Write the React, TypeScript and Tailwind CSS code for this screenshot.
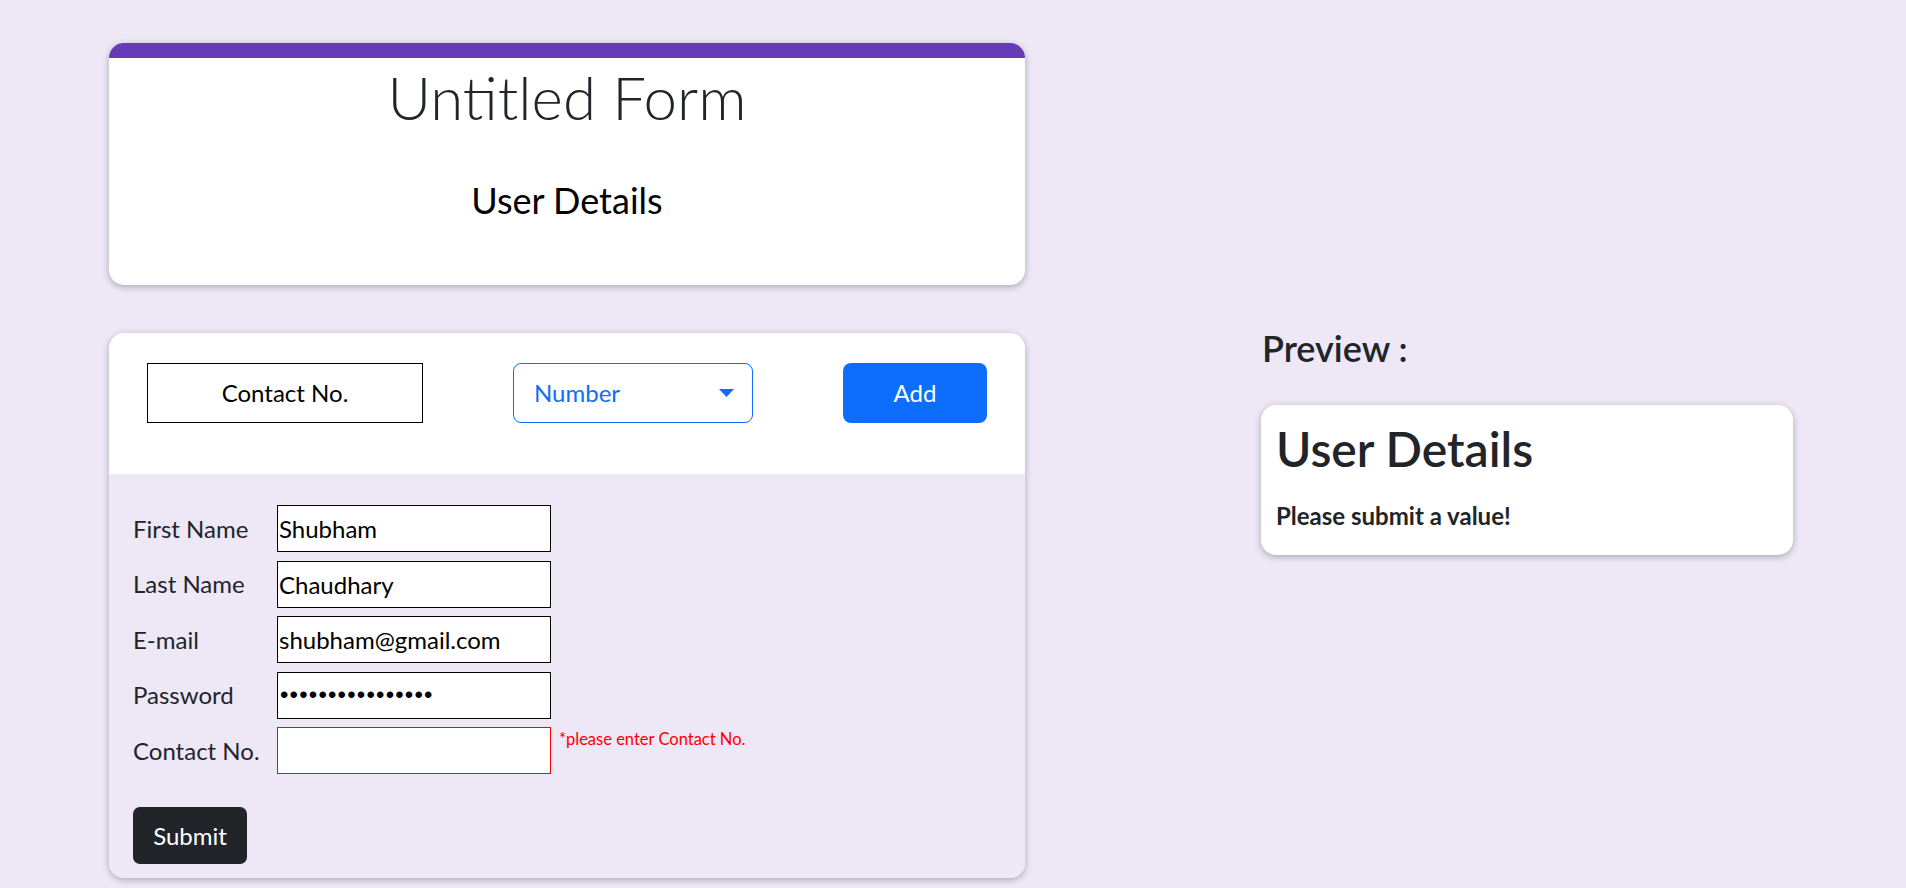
import React from "react";

export default function App() {
  const rows: { label: string; value: string; type?: string; error?: string }[] = [
    { label: "First Name", value: "Shubham" },
    { label: "Last Name", value: "Chaudhary" },
    { label: "E-mail", value: "shubham@gmail.com" },
    { label: "Password", value: "abcdefghijklmnop", type: "password" },
    { label: "Contact No.", value: "", error: "*please enter Contact No." },
  ];
  return (
    <div className="min-h-screen bg-[#ede7f6] font-['Lato',sans-serif] text-[#212529] flex items-start">
      <div className="ml-[109px] w-[916px] pt-[43px]">
        <div className="bg-white rounded-[15px] border-t-[15px] border-[#673ab7] shadow-[0_2px_7px_rgba(0,0,0,0.28)] h-[242px] flex flex-col items-center">
          <h1 className="mt-[3px] text-[60px] leading-[1.2] font-light">Untitled Form</h1>
          <h4 className="mt-[46px] text-[36px] leading-[1.2] text-black">User Details</h4>
        </div>
        <div className="mt-[48px] bg-white rounded-[15px] overflow-hidden shadow-[0_2px_7px_rgba(0,0,0,0.28)] h-[545px] flex flex-col">
          <div className="h-[141px] shrink-0 px-[38px] pt-[30px] flex justify-between items-start">
            <div className="w-[276px] h-[60px] border border-black flex items-center justify-center text-[24px] text-black">
              Contact No.
            </div>
            <div className="w-[240px] h-[60px] border border-[#0d6efd] rounded-[8px] flex items-center justify-between pl-[20px] pr-[18px] text-[24px] text-[#0d6efd]">
              <span>Number</span>
              <svg width="15" height="8" viewBox="0 0 15 8">
                <path d="M0 0 L15 0 L7.5 8 Z" fill="#0d6efd" />
              </svg>
            </div>
            <div className="w-[144px] h-[60px] bg-[#0d6efd] rounded-[8px] flex items-center justify-center text-[24px] text-white">
              Add
            </div>
          </div>
          <div className="flex-1 bg-[#ede7f6] px-[24px] pt-[31px] flex flex-col">
            <div className="flex flex-col gap-[8.5px]">
              {rows.map((r) => (
                <div key={r.label} className="flex items-start">
                  <div className="w-[144px] h-[47px] flex items-center text-[24px]">{r.label}</div>
                  {r.type === "password" ? (
                    <input
                      readOnly
                      type="password"
                      value={r.value}
                      className="w-[274px] h-[47px] bg-white pl-[2px] text-[24px] tracking-[1.2px] text-black outline-none border border-black font-['Liberation_Sans',sans-serif]"
                    />
                  ) : (
                    <input
                      readOnly
                      type="text"
                      value={r.value}
                      className={
                        r.error
                          ? "w-[274px] h-[47px] bg-white px-[1px] text-[24px] text-black outline-none border border-[#ff0000]"
                          : "w-[274px] h-[47px] bg-white px-[1px] text-[24px] text-black outline-none border border-black"
                      }
                    />
                  )}
                  {r.error && (
                    <span className="ml-[8px] mt-[3px] text-[16.5px] leading-[1.2] text-[#ff0000]">{r.error}</span>
                  )}
                </div>
              ))}
            </div>
            <div className="mt-[33px] w-[114px] h-[57px] bg-[#212529] rounded-[7px] flex items-center justify-center text-[24px] text-white">
              Submit
            </div>
          </div>
        </div>
      </div>
      <div className="ml-[236px] w-[532px] pt-[327px]">
        <h4 className="text-[36px] leading-[1.2] font-semibold pl-[1px]">Preview :</h4>
        <div className="mt-[35px] bg-white rounded-[15px] shadow-[0_2px_7px_rgba(0,0,0,0.28)] h-[150px] px-[15px] pt-[15px]">
          <h2 className="text-[48px] leading-[1.2] font-semibold">User Details</h2>
          <p className="mt-[24px] text-[24px] leading-[1.2] font-bold">Please submit a value!</p>
        </div>
      </div>
    </div>
  );
}
